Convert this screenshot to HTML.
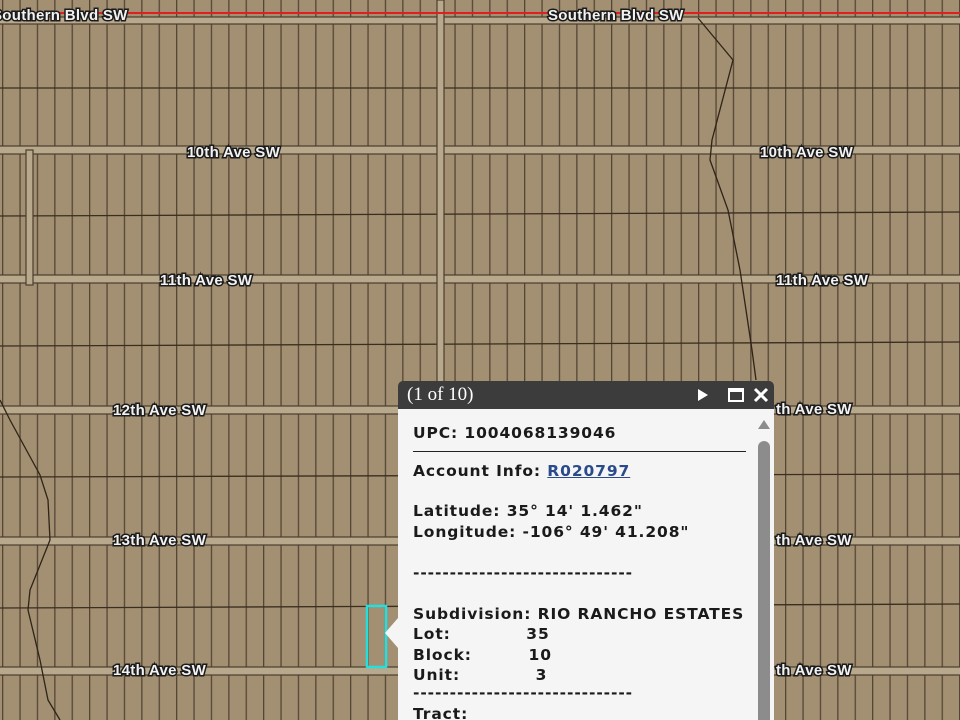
<!DOCTYPE html>
<html><head><meta charset="utf-8">
<style>
html,body{margin:0;padding:0;width:960px;height:720px;overflow:hidden;background:#a08d71}
#map{position:absolute;left:0;top:0}
.popup{position:absolute;left:398px;top:381px;width:376px;height:339px;overflow:hidden}
.hdr{position:absolute;left:0;top:0;width:376px;height:28px;background:#3c3c3c;border-radius:5px 5px 0 0;color:#fff;font-family:"Liberation Serif",serif;font-size:19px;line-height:28px}
.hdr span{position:absolute;left:9px;top:0}
.body{position:absolute;left:0;top:28px;width:376px;height:311px;background:#f5f5f5;overflow:hidden}
.c{position:absolute;left:15px;font-family:"DejaVu Sans",Verdana,sans-serif;font-weight:bold;font-size:15.5px;letter-spacing:0.9px;color:#1a1a1a;white-space:pre;line-height:20px}
a{color:#2a4a8a}
</style></head><body>
<svg id="map" width="960" height="720" viewBox="0 0 960 720">
<defs>
<pattern id="lots" width="17.4" height="720" patternUnits="userSpaceOnUse" x="2">
<rect x="0" y="0" width="1.3" height="720" fill="#3a2e20"/>
</pattern>
</defs>
<rect width="960" height="720" fill="#a38f72"/>
<rect width="960" height="720" fill="url(#lots)" opacity="0.75"/>
<g stroke="#3a2e20" stroke-width="1.3">
<line x1="0" y1="88" x2="960" y2="88"/>
<line x1="0" y1="216" x2="960" y2="212"/>
<line x1="0" y1="346" x2="960" y2="342"/>
<line x1="0" y1="477" x2="960" y2="474"/>
<line x1="0" y1="608" x2="960" y2="604"/>
</g>
<g fill="#b9a98c" stroke="#4a3e2e" stroke-width="1.2">
<rect x="-2" y="17" width="964" height="7"/>
<rect x="-2" y="146" width="964" height="8"/>
<rect x="-2" y="275" width="964" height="8"/>
<rect x="-2" y="406" width="964" height="8"/>
<rect x="-2" y="537" width="964" height="8"/>
<rect x="-2" y="667" width="964" height="8"/>
<rect x="437" y="0" width="7" height="720"/>
<rect x="26" y="150" width="7" height="135"/>
</g>
<g stroke="#2e2418" stroke-width="1.3" fill="none">
<path d="M698 18 L733 60 L712 140 L710 160 L728 210 L740 270 L752 350 L756 380"/>
<path d="M0 400 L10 420 L40 475 L48 500 L50 540 L30 590 L28 610 L40 660 L48 700 L60 720"/>
</g>
<line x1="0" y1="13" x2="960" y2="13" stroke="#e02020" stroke-width="2"/>
<g font-family="Liberation Sans,Arial,sans-serif" font-weight="bold" font-size="15" letter-spacing="0.3" fill="#f2f2f2" stroke="#1a1a1a" stroke-width="3" paint-order="stroke">
<text x="-8" y="20">Southern Blvd SW</text>
<text x="548" y="20">Southern Blvd SW</text>
<text x="187" y="157">10th Ave SW</text>
<text x="760" y="157">10th Ave SW</text>
<text x="160" y="285">11th Ave SW</text>
<text x="776" y="285">11th Ave SW</text>
<text x="113" y="415">12th Ave SW</text>
<text x="776" y="414">th Ave SW</text>
<text x="113" y="545">13th Ave SW</text>
<text x="776" y="545">th Ave SW</text>
<text x="113" y="675">14th Ave SW</text>
<text x="776" y="675">th Ave SW</text>
</g>
<rect x="367" y="606" width="19" height="61" fill="none" stroke="#22e0e0" stroke-width="2.5"/>
<polygon points="398,618 385,633 398,648" fill="#f5f5f5"/>
</svg>
<div class="popup">
<div class="hdr"><span>(1 of 10)</span>
<svg style="position:absolute;left:298px;top:7px" width="14" height="14"><polygon points="2,1 12,7 2,13" fill="#fff"/></svg>
<svg style="position:absolute;left:330px;top:7px" width="16" height="15"><rect x="1" y="1" width="14" height="12" fill="none" stroke="#fff" stroke-width="2"/><rect x="1" y="1" width="14" height="3" fill="#fff"/></svg>
<svg style="position:absolute;left:355px;top:6px" width="16" height="16"><path d="M2 2L14 14M14 2L2 14" stroke="#fff" stroke-width="3"/></svg>
</div>
<div class="body">
<div class="c" style="top:14px">UPC: 1004068139046</div>
<div style="position:absolute;left:15px;top:42px;width:333px;height:1px;background:#222"></div>
<div class="c" style="top:52px">Account Info: <a href="#">R020797</a></div>
<div class="c" style="top:92px">Latitude: 35° 14' 1.462"</div>
<div class="c" style="top:113px">Longitude: -106° 49' 41.208"</div>
<div class="c" style="top:154px">------------------------------</div>
<div class="c" style="top:195px">Subdivision: RIO RANCHO ESTATES</div>
<div class="c" style="top:215px">Lot:            35</div>
<div class="c" style="top:236px">Block:         10</div>
<div class="c" style="top:256px">Unit:            3</div>
<div class="c" style="top:274px">------------------------------</div>
<div class="c" style="top:295px">Tract:</div>
<svg style="position:absolute;left:358px;top:8px" width="16" height="14"><polygon points="2,12 8,3 14,12" fill="#8c8c8c"/></svg>
<div style="position:absolute;left:360px;top:32px;width:12px;height:290px;background:#8c8c8c;border-radius:6px"></div>
</div>
</div>
</body></html>
